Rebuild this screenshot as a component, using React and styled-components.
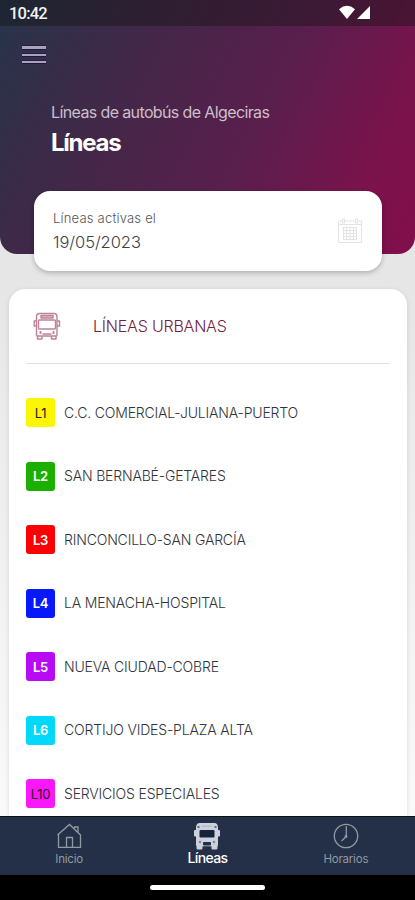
import React from "react";
import styled, { createGlobalStyle } from "styled-components";

const GlobalStyle = createGlobalStyle`
  * { box-sizing: border-box; }
  html, body { margin: 0; padding: 0; }
  body { font-family: Inter, "Liberation Sans", sans-serif; overflow: hidden; background: #000; }
`;

const Screen = styled.div`
  width: 415px;
  height: 900px;
  display: flex;
  flex-direction: column;
  overflow: hidden;
  background: linear-gradient(180deg, #e5e5e5 0, #e6e6e6 270px, #fafafa 815px);
`;

const Header = styled.header`
  flex: none;
  height: 254px;
  border-radius: 0 0 17px 17px;
  background: linear-gradient(117deg, #263449 0%, #432748 31%, #5a1e4d 60%, #7a134c 84%, #820e4b 100%);
`;

const StatusBar = styled.div`
  height: 26px;
  display: flex;
  align-items: center;
  justify-content: space-between;
  padding: 2px 44px 0 9px;
  background: rgba(20, 18, 18, 0.42);
  color: #f3f3f3;
`;

const Time = styled.span`
  font: 500 16.5px/20px Roboto, sans-serif;
  letter-spacing: -0.8px;
`;

const Signals = styled.svg`
  display: block;
  width: 32px;
  height: 15px;
  margin-top: -3px;
`;

const MenuButton = styled.button`
  display: flex;
  flex-direction: column;
  gap: 5px;
  width: 24px;
  margin: 20px 0 0 22px;
  padding: 0;
  border: 0;
  background: none;
`;

const MenuLine = styled.span`
  height: ${(p) => (p.$thick ? 3 : 2)}px;
  background: #a9a3b8;
  box-shadow: 0 1px 0 #201747, 0 -1px 0 #2a1b49;
`;

const Heading = styled.div`
  display: flex;
  flex-direction: column;
  padding: 39px 0 0 51px;
`;

const Subtitle = styled.span`
  font-size: 16px;
  line-height: 20px;
  font-weight: 400;
  letter-spacing: -0.62px;
  color: #cbbfca;
`;

const Title = styled.h1`
  margin: 7px 0 0;
  font-size: 24px;
  line-height: 28px;
  font-weight: 650;
  letter-spacing: -1.25px;
  color: #fff;
`;

const DateCard = styled.section`
  flex: none;
  display: flex;
  align-items: center;
  justify-content: space-between;
  height: 80px;
  margin: -63px 33px 0 34px;
  padding: 0 19px;
  border-radius: 16px;
  background: #fff;
  box-shadow: 0 2px 5px rgba(0, 0, 0, 0.24);
`;

const DateText = styled.div`
  display: flex;
  flex-direction: column;
`;

const DateLabel = styled.span`
  font-size: 13px;
  line-height: 18px;
  font-weight: 300;
  letter-spacing: 0.2px;
  color: #555;
`;

const DateValue = styled.span`
  margin-top: 4px;
  font-size: 16.5px;
  line-height: 22px;
  font-weight: 300;
  letter-spacing: -0.05px;
  color: #3d4148;
`;

const CalendarSvg = styled.svg`
  display: block;
  width: 26px;
  height: 26px;
`;

const LinesCard = styled.main`
  flex: 1;
  min-height: 0;
  margin: 18px 8px 0 9px;
  padding: 0 17px;
  border-radius: 16px 16px 0 0;
  background: #fff;
  box-shadow: 0 1px 5px rgba(0, 0, 0, 0.12);
  overflow: hidden;
`;

const CardHeader = styled.div`
  display: flex;
  align-items: center;
  gap: 32px;
  height: 75px;
  padding-left: 7px;
  border-bottom: 1px solid #dedede;
`;

const CardTitle = styled.h2`
  margin: 0;
  font-size: 16px;
  line-height: 20px;
  font-weight: 300;
  letter-spacing: -0.2px;
  color: #76203e;
`;

const BusSvg = styled.svg`
  display: block;
  width: 28px;
  height: 28px;
  color: ${(p) => p.$color};
`;

const LineList = styled.ul`
  display: flex;
  flex-direction: column;
  margin: 0;
  padding: 17px 0 0;
  list-style: none;
`;

const LineRow = styled.li`
  flex: none;
  display: flex;
  align-items: center;
  gap: 9px;
  height: 63.5px;
`;

const LineBadge = styled.span`
  display: flex;
  align-items: center;
  justify-content: center;
  width: 29px;
  height: 29px;
  border-radius: 3px;
  background: ${(p) => p.$bg};
  color: ${(p) => (p.$dark ? "#30152a" : "#fff")};
  font-size: 13px;
  font-weight: ${(p) => (p.$dark ? 400 : 600)};
  letter-spacing: -0.3px;
`;

const LineName = styled.span`
  font-size: 14px;
  line-height: 18px;
  font-weight: 300;
  letter-spacing: -0.17px;
  white-space: nowrap;
  color: #30343a;
`;

const TabBar = styled.nav`
  flex: none;
  display: grid;
  grid-template-columns: repeat(3, 1fr);
  height: 59px;
  border-top: 1px solid #0b1019;
  background: #233047;
`;

const Tab = styled.a`
  display: flex;
  flex-direction: column;
  align-items: center;
  padding-top: ${(p) => (p.$active ? 5 : 6)}px;
  color: ${(p) => (p.$active ? "#fff" : "#929aa3")};
`;

const TabIcon = styled.svg`
  display: block;
  width: 26px;
  height: 26px;
`;

const TabLabel = styled.span`
  margin-top: ${(p) => (p.$active ? 0 : 3)}px;
  font-size: ${(p) => (p.$active ? 14 : 11.5)}px;
  line-height: 15px;
  font-weight: ${(p) => (p.$active ? 500 : 400)};
  letter-spacing: ${(p) => (p.$active ? -0.65 : -0.2)}px;
`;

const SystemBar = styled.footer`
  flex: none;
  display: flex;
  justify-content: center;
  height: 25px;
  padding-top: 10px;
  background: #000;
`;

const HomeHandle = styled.span`
  width: 115px;
  height: 5px;
  border-radius: 3px;
  background: #fff;
`;

const LINES = [
  { code: "L1", name: "C.C. COMERCIAL-JULIANA-PUERTO", bg: "#faf606", dark: true },
  { code: "L2", name: "SAN BERNABÉ-GETARES", bg: "#1bb000" },
  { code: "L3", name: "RINCONCILLO-SAN GARCÍA", bg: "#fb0005" },
  { code: "L4", name: "LA MENACHA-HOSPITAL", bg: "#0719fb" },
  { code: "L5", name: "NUEVA CIUDAD-COBRE", bg: "#b80af4" },
  { code: "L6", name: "CORTIJO VIDES-PLAZA ALTA", bg: "#02d8fa" },
  { code: "L10", name: "SERVICIOS ESPECIALES", bg: "#fa18fa", dark: true },
];

function BusOutlineIcon() {
  return (
    <BusSvg $color="#bd8296" viewBox="0 0 28 28" fill="none" stroke="currentColor" strokeWidth="1.4" strokeLinejoin="round">
      <path d="M3.500 23V5q0-3.500 3-3.500h14.500q3 0 3 3.500v18q0 1-1 1H4.500q-1 0-1-1z" />
      <rect x="5.500" y="8" width="17" height="9" rx="1" />
      <path d="M8 3.500h12v2.500H8z" fill="currentColor" fillOpacity=".5" />
      <path d="M3.500 9H1.200v5h2.300M24 9h2.500v5H24M4.500 24v3h4.500v-3M18.500 24v3H23v-3M9.500 22h9" />
      <path d="M7.500 19v3M20.500 19v3" strokeWidth="1.800" />
    </BusSvg>
  );
}

function BusSolidIcon() {
  return (
    <BusSvg $color="#cdd1dc" viewBox="0 0 28 28" fill="currentColor">
      <path d="M6.500 1h15q3 0 3.500 4v17.500q0 2-2 2H5q-2 0-2-2V5q.5-4 3.500-4z" />
      <rect x="1" y="8" width="3" height="6.500" rx="1" />
      <rect x="24" y="8" width="3" height="6.500" rx="1" />
      <path d="M3.500 22h6v4.500q0 1-1 1H5q-1.500 0-1.500-1zM18.500 22h6v4.500q0 1-1.500 1h-3.500q-1 0-1-1z" />
      <rect x="6.500" y="8" width="15" height="7.500" rx="1" fill="#17223b" />
      <path d="M9 4.200h10" stroke="#aeb5c4" />
      <path d="M4.500 5h2M21.500 5h2" stroke="#39465d" strokeWidth="1.500" />
      <path d="M10.500 20.500h7V23h-7zM10 25h8" fill="#233047" stroke="#233047" />
      <circle cx="7" cy="20" r="1.200" fill="#7a8497" />
      <circle cx="21" cy="20" r="1.200" fill="#7a8497" />
    </BusSvg>
  );
}

function HomeIcon() {
  return (
    <TabIcon viewBox="0 0 26 26" fill="none" stroke="currentColor" strokeWidth="1.300">
      <path d="M2.500 11.500V24.300h22V11.500M1.500 12 13.500 1.500 24.500 12M18.500 5V4h3.500v5" />
      <path d="M10.500 24v-9.500h6V24" />
    </TabIcon>
  );
}

function ClockIcon() {
  return (
    <TabIcon viewBox="0 0 26 26" fill="none" stroke="currentColor" strokeWidth="1.300">
      <circle cx="13" cy="13" r="11.700" />
      <path d="M13.300 3v10.500L8.500 18" />
      <circle cx="13" cy="13.500" r=".8" />
    </TabIcon>
  );
}

function CalendarIcon() {
  return (
    <CalendarSvg viewBox="0 0 26 26" fill="none" stroke="#e4e4e4" strokeWidth="1.100">
      <rect x="1.500" y="3" width="23" height="21.500" rx="1" />
      <path d="M2 6.500h22M6.500 9.500h13v12h-13zM6.500 12.500h13M6.500 15.500h13M6.500 18.500h13M9.500 9.500v12M13 9.500v12M16.500 9.500v12" />
      <path d="M5.500 1h2v4h-2zM18.500 1h2v4h-2z" fill="#fff" />
    </CalendarSvg>
  );
}

export default function App() {
  return (
    <>
      <GlobalStyle />
      <Screen>
        <Header>
          <StatusBar>
            <Time>10:42</Time>
            <Signals viewBox="0 0 32 15" fill="#fff">
              <path d="M0 4.200Q8 -2.500 16 4.200L8 14zM18 14 31 1v13z" />
            </Signals>
          </StatusBar>
          <MenuButton aria-label="Menú">
            <MenuLine $thick />
            <MenuLine />
            <MenuLine />
          </MenuButton>
          <Heading>
            <Subtitle>Líneas de autobús de Algeciras</Subtitle>
            <Title>Líneas</Title>
          </Heading>
        </Header>
        <DateCard>
          <DateText>
            <DateLabel>Líneas activas el</DateLabel>
            <DateValue>19/05/2023</DateValue>
          </DateText>
          <CalendarIcon />
        </DateCard>
        <LinesCard>
          <CardHeader>
            <BusOutlineIcon />
            <CardTitle>LÍNEAS URBANAS</CardTitle>
          </CardHeader>
          <LineList>
            {LINES.map((l) => (
              <LineRow key={l.code}>
                <LineBadge $bg={l.bg} $dark={l.dark}>{l.code}</LineBadge>
                <LineName>{l.name}</LineName>
              </LineRow>
            ))}
          </LineList>
        </LinesCard>
        <TabBar>
          <Tab>
            <HomeIcon />
            <TabLabel>Inicio</TabLabel>
          </Tab>
          <Tab $active>
            <BusSolidIcon />
            <TabLabel $active>Líneas</TabLabel>
          </Tab>
          <Tab>
            <ClockIcon />
            <TabLabel>Horarios</TabLabel>
          </Tab>
        </TabBar>
        <SystemBar>
          <HomeHandle />
        </SystemBar>
      </Screen>
    </>
  );
}
